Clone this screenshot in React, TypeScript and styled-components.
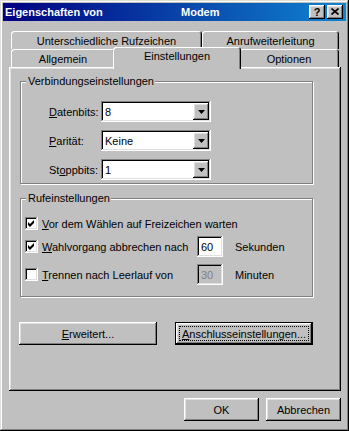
import React from "react";
import styled, { createGlobalStyle, css } from "styled-components";

const GlobalStyle = createGlobalStyle`
  html, body {
    margin: 0;
    padding: 0;
    background: #c0c0c0;
  }
  body {
    font-family: "Liberation Sans", Arial, sans-serif;
    font-size: 11px;
    color: #000;
  }
  * {
    box-sizing: border-box;
  }
`;

const raised = css`
  box-shadow: inset -1px -1px #000, inset 1px 1px #fff, inset -2px -2px #808080,
    inset 2px 2px #dfdfdf;
`;

const sunken = css`
  box-shadow: inset -1px -1px #fff, inset 1px 1px #808080, inset -2px -2px #dfdfdf,
    inset 2px 2px #000;
`;

const Window = styled.div`
  width: 349px;
  height: 431px;
  padding: 3px;
  display: flex;
  flex-direction: column;
  background: #c0c0c0;
  box-shadow: inset -1px -1px #000, inset 1px 1px #dfdfdf, inset -2px -2px #808080,
    inset 2px 2px #fff;
`;

const TitleBar = styled.div`
  height: 18px;
  flex-shrink: 0;
  display: flex;
  align-items: center;
  padding: 0 3px 0 2px;
  background: linear-gradient(to right, #000080, #1084d0);
  color: #fff;
  font-weight: bold;
  font-size: 11px;
  white-space: nowrap;
`;

const Caption = styled.span`
  width: 176px;
`;

const TitleButtons = styled.div`
  margin-left: auto;
  display: flex;
  gap: 2px;
`;

const TitleButton = styled.div`
  width: 16px;
  height: 14px;
  background: #c0c0c0;
  ${raised};
  display: flex;
  align-items: center;
  justify-content: center;
  color: #000;
  font-size: 11px;
  font-weight: bold;
  padding-bottom: 1px;
`;

const Body = styled.div`
  flex: 1;
  display: flex;
  flex-direction: column;
  padding: 10px 5px 0 6px;
`;

const TabStrip = styled.div`
  margin-left: 2px;
  width: 328px;
  display: flex;
  flex-direction: column;
`;

const TabRow = styled.div`
  height: 18px;
  display: flex;
  align-items: flex-start;
`;

const Tab = styled.div<{ $w: number; $active?: boolean }>`
  width: ${(p) => p.$w}px;
  height: 18px;
  flex-shrink: 0;
  display: flex;
  align-items: center;
  justify-content: center;
  padding-top: 1px;
  background: #c0c0c0;
  border-radius: 3px 3px 0 0;
  box-shadow: inset 1px 1px #fff, inset -1px 0 #000, inset -2px 0 #808080;
  white-space: nowrap;
  ${(p) =>
    p.$active &&
    css`
      width: ${p.$w + 4}px;
      height: 22px;
      margin: -2px -2px 0;
      padding: 0 0 4px;
      position: relative;
      z-index: 1;
    `}
`;

const Panel = styled.div`
  width: 332px;
  height: 324px;
  flex-shrink: 0;
  padding: 2px 2px 2px 11px;
  display: flex;
  flex-direction: column;
  ${raised};
`;

const Group = styled.div<{ $h: number; $mt: number }>`
  width: 293px;
  height: ${(p) => p.$h}px;
  margin-top: ${(p) => p.$mt}px;
  flex-shrink: 0;
  border: 1px solid #808080;
  box-shadow: inset 1px 1px #fff, 1px 1px #fff;
  display: flex;
  flex-direction: column;
`;

const Legend = styled.div`
  align-self: flex-start;
  margin: -7px 0 0 5px;
  padding: 0 1px 0 2px;
  line-height: 13px;
  background: #c0c0c0;
`;

const Fields = styled.div`
  margin-top: 13px;
  padding-left: 28px;
  display: flex;
  flex-direction: column;
  gap: 8px;
`;

const FieldRow = styled.div`
  height: 21px;
  display: flex;
  align-items: center;
`;

const FieldLabel = styled.span`
  width: 52px;
`;

const Combo = styled.div`
  width: 110px;
  height: 21px;
  padding: 2px;
  display: flex;
  align-items: center;
  background: #fff;
  ${sunken};
`;

const ComboText = styled.span`
  flex: 1;
  padding-left: 2px;
`;

const DropButton = styled.div`
  width: 16px;
  height: 17px;
  display: flex;
  align-items: center;
  justify-content: center;
  background: #c0c0c0;
  ${raised};
`;

const Checks = styled.div`
  padding-left: 4px;
  display: flex;
  flex-direction: column;
`;

const CheckRow = styled.div<{ $h: number; $mt: number }>`
  height: ${(p) => p.$h}px;
  margin-top: ${(p) => p.$mt}px;
  display: flex;
  align-items: center;
`;

const CheckBox = styled.div`
  width: 13px;
  height: 13px;
  flex-shrink: 0;
  display: flex;
  align-items: center;
  justify-content: center;
  background: #fff;
  ${sunken};
`;

const CheckLabel = styled.span`
  margin-left: 4px;
  white-space: nowrap;
`;

const CheckLabelFixed = styled(CheckLabel)`
  width: 155px;
`;

const Edit = styled.div<{ $disabled?: boolean }>`
  width: 26px;
  height: 21px;
  padding: 0 4px;
  display: flex;
  align-items: center;
  background: ${(p) => (p.$disabled ? "#c0c0c0" : "#fff")};
  color: ${(p) => (p.$disabled ? "#808080" : "#000")};
  ${sunken};
`;

const Unit = styled.span`
  margin-left: 12px;
`;

const PanelButtons = styled.div`
  margin-top: 25px;
  margin-left: -1px;
  display: flex;
  gap: 18px;
`;

const Button = styled.div<{ $w: number; $default?: boolean }>`
  width: ${(p) => p.$w}px;
  height: 23px;
  display: flex;
  align-items: center;
  justify-content: center;
  background: #c0c0c0;
  white-space: nowrap;
  ${raised};
  ${(p) =>
    p.$default &&
    css`
      padding: 4px;
      box-shadow: inset 0 0 0 1px #000, inset -2px -2px #000, inset 2px 2px #fff,
        inset -3px -3px #808080, inset 3px 3px #dfdfdf;
    `}
`;

const Focus = styled.span`
  flex: 1;
  align-self: stretch;
  display: flex;
  align-items: center;
  justify-content: center;
  border: 1px dotted #000;
`;

const DialogButtons = styled.div`
  margin-top: 7px;
  display: flex;
  justify-content: flex-end;
  gap: 7px;
`;

const Arrow = () => (
  <svg width="7" height="4" viewBox="0 0 7 4">
    <path d="M0 0H7L3.5 4Z" fill="#000" />
  </svg>
);

const Check = () => (
  <svg width="7" height="7" viewBox="0 0 7 7">
    <path d="M0 2L2 4L6 0V3L2 7L0 5Z" fill="#000" />
  </svg>
);

const Close = () => (
  <svg width="8" height="7" viewBox="0 0 8 7">
    <path d="M0.5 0.5L7.5 6.5M7.5 0.5L0.5 6.5" stroke="#000" strokeWidth="1.6" />
  </svg>
);

const fields = [
  { label: "Datenbits:", key: "D", rest: "atenbits:", value: "8" },
  { label: "Parität:", key: "P", rest: "arität:", value: "Keine" },
  { label: "Stoppbits:", key: "", rest: "", value: "1" },
];

const App = () => {
  return (
    <>
      <GlobalStyle />
      <Window>
        <TitleBar>
          <Caption>Eigenschaften von</Caption>
          <span>Modem</span>
          <TitleButtons>
            <TitleButton>?</TitleButton>
            <TitleButton>
              <Close />
            </TitleButton>
          </TitleButtons>
        </TitleBar>
        <Body>
          <TabStrip>
            <TabRow>
              <Tab $w={191}>Unterschiedliche Rufzeichen</Tab>
              <Tab $w={137}>Anrufweiterleitung</Tab>
            </TabRow>
            <TabRow>
              <Tab $w={104}>Allgemein</Tab>
              <Tab $w={124} $active>
                Einstellungen
              </Tab>
              <Tab $w={100}>Optionen</Tab>
            </TabRow>
          </TabStrip>
          <Panel>
            <Group $h={103} $mt={12}>
              <Legend>Verbindungseinstellungen</Legend>
              <Fields>
                {fields.map((f) => (
                  <FieldRow key={f.label}>
                    <FieldLabel>
                      {f.key ? (
                        <>
                          <u>{f.key}</u>
                          {f.rest}
                        </>
                      ) : (
                        <>
                          St<u>o</u>ppbits:
                        </>
                      )}
                    </FieldLabel>
                    <Combo>
                      <ComboText>{f.value}</ComboText>
                      <DropButton>
                        <Arrow />
                      </DropButton>
                    </Combo>
                  </FieldRow>
                ))}
              </Fields>
            </Group>
            <Group $h={99} $mt={14}>
              <Legend>Rufeinstellungen</Legend>
              <Checks>
                <CheckRow $h={13} $mt={12}>
                  <CheckBox>
                    <Check />
                  </CheckBox>
                  <CheckLabel>
                    <u>V</u>or dem Wählen auf Freizeichen warten
                  </CheckLabel>
                </CheckRow>
                <CheckRow $h={21} $mt={6}>
                  <CheckBox>
                    <Check />
                  </CheckBox>
                  <CheckLabelFixed>
                    <u>W</u>ahlvorgang abbrechen nach
                  </CheckLabelFixed>
                  <Edit>60</Edit>
                  <Unit>Sekunden</Unit>
                </CheckRow>
                <CheckRow $h={21} $mt={7}>
                  <CheckBox />
                  <CheckLabelFixed>
                    <u>T</u>rennen nach Leerlauf von
                  </CheckLabelFixed>
                  <Edit $disabled>30</Edit>
                  <Unit>Minuten</Unit>
                </CheckRow>
              </Checks>
            </Group>
            <PanelButtons>
              <Button $w={138}>
                <u>E</u>rweitert...
              </Button>
              <Button $w={138} $default>
                <Focus>
                  <u>A</u>nschlusseinstellungen...
                </Focus>
              </Button>
            </PanelButtons>
          </Panel>
          <DialogButtons>
            <Button $w={75}>OK</Button>
            <Button $w={75}>Abbrechen</Button>
          </DialogButtons>
        </Body>
      </Window>
    </>
  );
};

export default App;
